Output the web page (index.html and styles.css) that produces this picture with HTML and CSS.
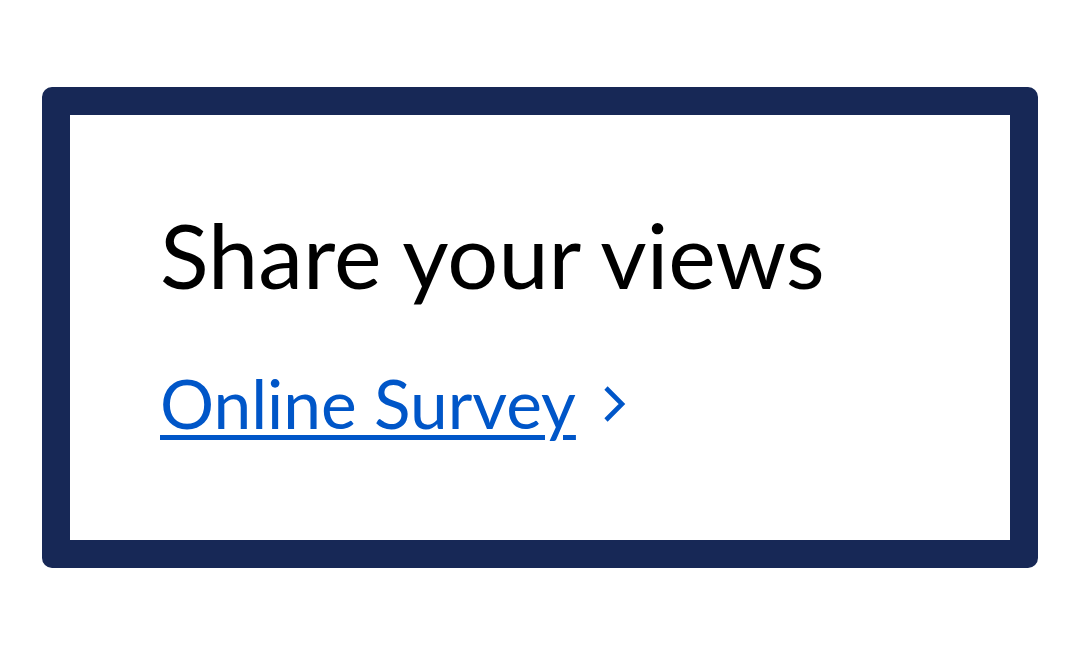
FILE: index.html
```html
<!DOCTYPE html>
<html lang="en">
<head>
<meta charset="utf-8">
<title>Share your views</title>
<link rel="stylesheet" href="styles.css">
</head>
<body>
<section class="card">
  <h2 class="card-title">Share your views</h2>
  <p class="card-link-row">
    <a class="card-link" href="#">Online Survey</a>
    <svg class="chevron" width="26" height="42" viewBox="0 0 26 42" aria-hidden="true">
      <path d="M6 5 L22 21 L6 37" fill="none" stroke="#0056c8" stroke-width="4.6" stroke-linecap="butt" stroke-linejoin="miter"/>
    </svg>
  </p>
</section>
</body>
</html>
```

FILE: styles.css
```css
html, body {
  margin: 0;
  padding: 0;
  background: #ffffff;
}

body {
  font-family: Lato, "Open Sans", sans-serif;
  padding: 87px 42px 0 42px;
}

.card {
  box-sizing: border-box;
  width: 996px;
  height: 481px;
  border: 28px solid #172856;
  border-radius: 10px;
  padding: 85px 90px 0 90px;
}

.card-title {
  margin: 0;
  font-size: 90px;
  font-weight: 400;
  line-height: 1.2;
  color: #000000;
}

.card-link-row {
  margin: 54px 0 0 0;
  display: flex;
  align-items: center;
  gap: 24px;
  font-size: 67.6px;
  line-height: 1.2;
}

.card-link {
  color: #0056c8;
  text-decoration: underline;
  text-decoration-thickness: 5px;
  text-underline-offset: 6px;
}

.chevron {
  display: block;
  margin-top: 3px;
}
```
